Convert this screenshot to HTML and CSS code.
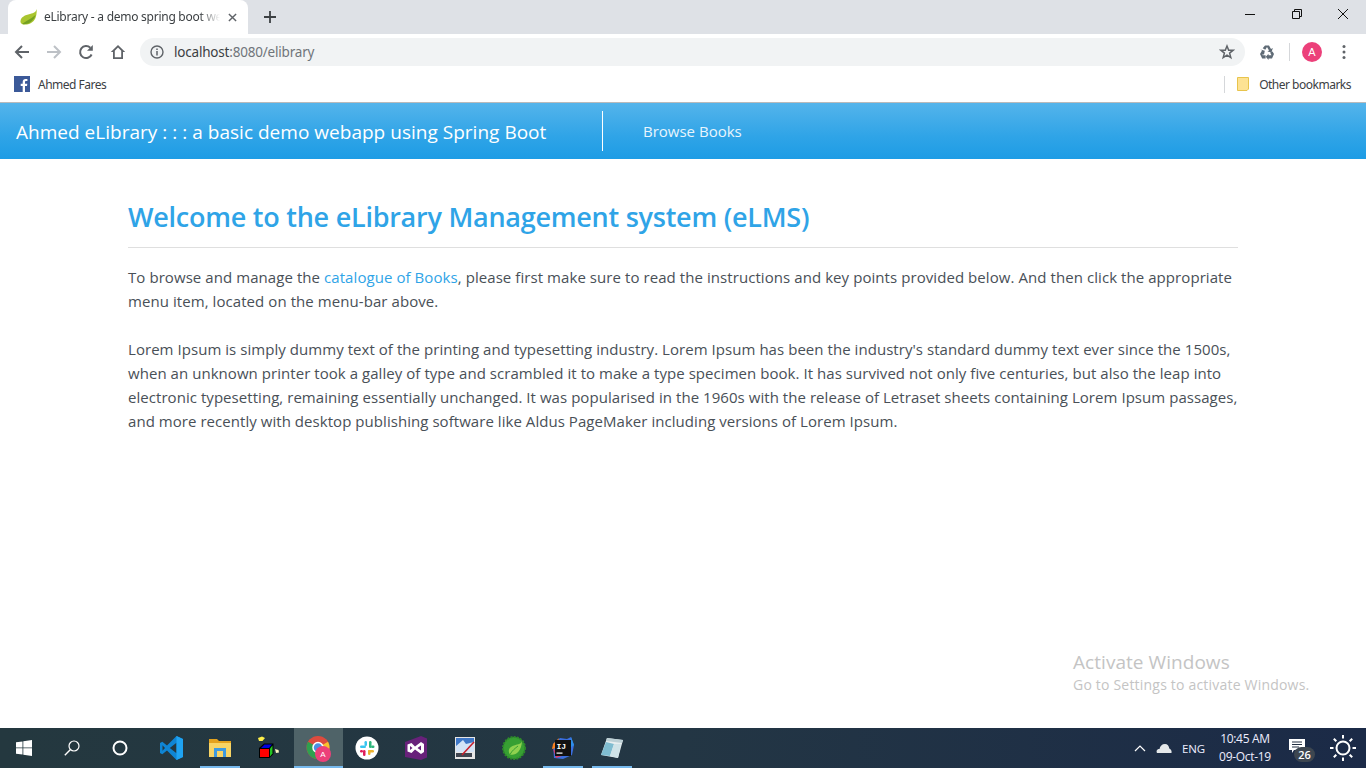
FILE: index.html
```html
<!DOCTYPE html>
<html lang="en">
<head>
<meta charset="utf-8">
<title>eLibrary - a demo spring boot webapp</title>
<link rel="stylesheet" href="styles.css">
</head>
<body>
<div class="tabstrip">
  <div class="tab">
    <svg class="favicon" viewBox="0 0 17 16"><path d="M16.500 0C16 3 14 4 10 5C5 6 1 8 .5 12C.3 13.500 1 14.500 2 15C6 16.500 13 15 15.500 9C16.500 6 17 3 16.500 0Z" fill="#a9c52f"/><path d="M2 15C6 12 10 10.500 15.500 6C14.500 11 9 15.500 3.500 15.300Z" fill="#74a022"/></svg>
    <span class="tab-title">eLibrary - a demo spring boot webapp</span>
    <svg class="tab-close" viewBox="0 0 10 10"><path d="M1 1L9 9M9 1L1 9" stroke="#5f6368" stroke-width="1.600"/></svg>
  </div>
  <svg class="new-tab" viewBox="0 0 12 12"><path d="M6 0V12M0 6H12" stroke="#3c4043" stroke-width="1.800"/></svg>
  <div class="win-controls">
    <svg viewBox="0 0 12 12"><path d="M1 6.500H11" stroke="#111" stroke-width="1"/></svg>
    <svg viewBox="0 0 12 12"><path d="M1.500 3.500H8.500V10.500H1.500ZM3.500 3.500V1.500H10.500V8.500H8.500" fill="none" stroke="#111" stroke-width="1"/></svg>
    <svg viewBox="0 0 12 12"><path d="M1 1L11 11M11 1L1 11" stroke="#111" stroke-width="1"/></svg>
  </div>
</div>

<div class="toolbar">
  <div class="tool"><svg viewBox="0 0 16 16"><path d="M15 8H2M8 2L2 8L8 14" fill="none" stroke="#5f6368" stroke-width="2"/></svg></div>
  <div class="tool"><svg viewBox="0 0 16 16"><path d="M1 8H14M8 2L14 8L8 14" fill="none" stroke="#bdc1c6" stroke-width="2"/></svg></div>
  <div class="tool"><svg viewBox="0 0 16 16"><path d="M13.600 10.500A6 6 0 1 1 12.300 3.800" fill="none" stroke="#5f6368" stroke-width="2"/><path d="M14.800 1V6.800H9Z" fill="#5f6368"/></svg></div>
  <div class="tool"><svg viewBox="0 0 16 16"><path d="M8 1L.8 8H3V15H13V8H15.200ZM8 3.600L11.200 6.800V13.300H4.800V6.800Z" fill="#5f6368" fill-rule="evenodd"/></svg></div>
  <div class="omnibox">
    <svg class="info" viewBox="0 0 14 14"><circle cx="7" cy="7" r="6" fill="none" stroke="#5f6368" stroke-width="1.400"/><path d="M7 6V10.500M7 3.400V5" stroke="#5f6368" stroke-width="1.500"/></svg>
    <span class="url"><span class="host">localhost</span>:8080/elibrary</span>
    <svg class="star" viewBox="0 0 16 16"><path d="M8 2L9.700 6.200H14.200L10.600 9.100L11.800 13.600L8 11.100L4.200 13.600L5.400 9.100L1.800 6.200H6.300Z" fill="none" stroke="#5f6368" stroke-width="1.500"/></svg>
  </div>
  <div class="ext"><svg viewBox="0 0 16 16"><path d="M6 1.500H10L12 5L13.800 4L12.500 8.500L8.500 7.500L10 6.500L8 3L6.300 5.800L3.700 4.300ZM1 10L3 6.500L1.300 5.500L5.800 6.800L5 10.800L3.700 10L3.600 11.200H6.600V14.500H3.200ZM15 10L13 14.500H9.500V16L6.800 12.800L9.500 9.800V11.200H12.500L11.200 8.800L13.500 7.500Z" fill="#5f6b76"/></svg></div>
  <div class="tool-sep"></div>
  <div class="avatar">A</div>
  <svg class="dots" viewBox="0 0 4 16"><circle cx="2" cy="2.500" r="1.500"/><circle cx="2" cy="8" r="1.500"/><circle cx="2" cy="13.500" r="1.500"/></svg>
</div>

<div class="bookmarks">
  <svg class="fb" viewBox="0 0 16 16"><rect width="16" height="16" fill="#3b5998"/><path d="M11 16V10H13L13.300 7.700H11V6.300C11 5.600 11.300 5.100 12.200 5.100H13.400V3.100C13 3 12.300 3 11.500 3C9.800 3 8.700 4 8.700 5.900V7.700H6.700V10H8.700V16Z" fill="#fff"/></svg>
  <span class="bm-label">Ahmed Fares</span>
  <div class="bm-spacer"></div>
  <div class="bm-sep"></div>
  <svg class="folder" viewBox="0 0 12 14"><path d="M.5 .5H11.500V12L10 13.500H.5Z" fill="#fde293" stroke="#e8c44c"/></svg>
  <span class="bm-label other">Other bookmarks</span>
</div>

<nav class="navbar">
  <a class="brand">Ahmed eLibrary : : : a basic demo webapp using Spring Boot</a>
  <div class="nav-divider"></div>
  <a class="nav-link">Browse Books</a>
</nav>

<main class="content">
  <h1 class="title">Welcome to the eLibrary Management system (eLMS)</h1>
  <hr class="rule">
  <p class="para">To browse and manage the <a class="link">catalogue of Books</a>, please first make sure to read the instructions and key points provided below. And then click the appropriate<br>menu item, located on the menu-bar above.</p>
  <p class="para lorem">Lorem Ipsum is simply dummy text of the printing and typesetting industry. Lorem Ipsum has been the industry's standard dummy text ever since the 1500s,<br>when an unknown printer took a galley of type and scrambled it to make a type specimen book. It has survived not only five centuries, but also the leap into<br>electronic typesetting, remaining essentially unchanged. It was popularised in the 1960s with the release of Letraset sheets containing Lorem Ipsum passages,<br>and more recently with desktop publishing software like Aldus PageMaker including versions of Lorem Ipsum.</p>
</main>

<div class="watermark">
  <div class="wm-big">Activate Windows</div>
  <div class="wm-small">Go to Settings to activate Windows.</div>
</div>

<footer class="taskbar">
  <div class="task sys"><svg class="i16" viewBox="0 0 16 16"><path d="M0 2.300L6.500 1.400V7.500H0ZM7.300 1.300L16 0V7.500H7.300ZM0 8.300H6.500V14.600L0 13.700ZM7.300 8.300H16V16L7.300 14.700Z" fill="#fff"/></svg></div>
  <div class="task sys"><svg class="i16" viewBox="0 0 16 16"><circle cx="10" cy="6" r="5" fill="none" stroke="#fff" stroke-width="1.200"/><path d="M6.500 9.500L.8 15.300" stroke="#fff" stroke-width="1.400"/></svg></div>
  <div class="task sys"><svg class="i16" viewBox="0 0 16 16"><circle cx="8" cy="8" r="6.500" fill="none" stroke="#fff" stroke-width="2"/></svg></div>
  <div class="task first-app"><svg class="i24" viewBox="0 0 24 24"><path d="M17.500 0L8 9.500L3.300 5.800L1 7V17L3.300 18.200L8 14.500L17.500 24L24 21V3ZM17.500 6.800V17.200L10.800 12ZM3.500 9.300L6 12L3.500 14.700Z" fill="#0f85d4" fill-rule="evenodd"/><path d="M17.500 0L24 3V21L17.500 24V17.200V6.800Z" fill="#1fa3f2"/></svg></div>
  <div class="task open"><svg class="i-folder" viewBox="0 0 22 18"><path d="M0 0H8L10 2H22V18H0Z" fill="#e3a21e"/><path d="M0 4H22V18H0Z" fill="#f7d465"/><path d="M5 9H17V18H14V12H8V18H5Z" fill="#3d9ae0"/></svg></div>
  <div class="task"><svg class="i24" viewBox="0 0 24 24"><path d="M2 12L7 7.500H16.500V18L12.500 22H2Z" fill="#000"/><path d="M3 13H12V21H3Z" fill="#f00"/><path d="M4 12L7.500 8.500H15L12 12Z" fill="#0000e0"/><path d="M13 12.500L15.500 9.500V17.500L13 20.500Z" fill="#22c422"/><path d="M1 2L5 0.500L8 2L5.500 5L2 5Z" fill="#fff04a"/><path d="M18 13L21.500 14L22 16.500L19 17Z" fill="#fff8c0"/></svg></div>
  <div class="task active"><svg class="i26" viewBox="0 0 26 26"><circle cx="13" cy="12.500" r="11.500" fill="#dd4b3e"/><path d="M13 12.500L3 6.800A11.500 11.500 0 0 0 13 24Z" fill="#2fa04f"/><path d="M13 12.500L13 24A11.500 11.500 0 0 0 23 6.800Z" fill="#f7c02e"/><circle cx="13" cy="12.500" r="5" fill="#4a90e2" stroke="#fff" stroke-width="1.500"/><circle cx="18" cy="19" r="8" fill="#ec407a"/><text x="18" y="22" class="badge-a">A</text></svg></div>
  <div class="task"><svg class="i24" viewBox="0 0 24 24"><circle cx="12" cy="12" r="11.500" fill="#fff"/><rect x="5" y="9.500" width="6" height="2.500" rx="1.200" fill="#36c5f0"/><rect x="9.500" y="5" width="2.500" height="5" rx="1.200" fill="#36c5f0"/><rect x="14" y="5" width="2.500" height="7" rx="1.200" fill="#2eb67d"/><rect x="16" y="9.500" width="3.500" height="2.500" rx="1.200" fill="#2eb67d"/><rect x="13" y="14" width="6" height="2.500" rx="1.200" fill="#ecb22e"/><rect x="13" y="14" width="2.500" height="5" rx="1.200" fill="#ecb22e"/><rect x="5" y="14" width="3" height="2.500" rx="1.200" fill="#e01e5a"/><rect x="8" y="14" width="2.500" height="6" rx="1.200" fill="#e01e5a"/></svg></div>
  <div class="task"><svg class="i24" viewBox="0 0 24 24"><path d="M17 0L23 2.500V21.500L17 24L1 21V6Z" fill="#68217a"/><path d="M3.500 8.500L7.500 7L11 10.500L17 6L20 8V16L17 18L11 13.500L7.500 17L3.500 15.500Z" fill="#fff"/><path d="M17 9.500V14.500L13.500 12ZM6 10L8.500 12L6 14Z" fill="#68217a"/></svg></div>
  <div class="task"><svg class="i-paint" viewBox="0 0 20 22"><rect width="20" height="22" fill="#e6e6e6"/><rect x="1" y="1" width="18" height="14" fill="#3f78c8"/><path d="M1 9L8 3L11 7L19 5V15H1Z" fill="#d3e3f6"/><rect x="1" y="16" width="16" height="4" fill="#3f4550"/><path d="M7 18L19 5" stroke="#c8202c" stroke-width="1.600"/></svg></div>
  <div class="task"><svg class="i24" viewBox="0 0 24 24"><circle cx="12" cy="12" r="11" fill="#37a033" stroke="#2d8a2a" stroke-width="2" stroke-dasharray="2 1.200"/><path d="M20 5C19 9 14.500 8 10.500 10C7 11.500 5.500 15 8 18.500C13 20 19.500 16 20 5Z" fill="#8fd14f"/><path d="M8 18.500C10 14.500 13 12.500 16 10" stroke="#37a033" fill="none"/></svg></div>
  <div class="task open"><svg class="i24" viewBox="0 0 24 24"><path d="M2 8L9 2L16 3L20 1L23 9L21 19L12 23L3 22Z" fill="#3a6fe0"/><path d="M2 8L8 2L5 12L1 13Z" fill="#fc801d"/><path d="M2 13L5 22L11 20Z" fill="#d83a6a"/><path d="M20 1L23 9L19 12Z" fill="#2d8fe8"/><rect x="4" y="4" width="16" height="16" fill="#111"/><text x="5.500" y="13" class="ij">IJ</text><rect x="5.500" y="16.500" width="6" height="1.200" fill="#fff"/></svg></div>
  <div class="task open"><svg class="i24" viewBox="0 0 24 24"><path d="M7 2L23 4L18 22L1 19Z" fill="#e8eef0"/><path d="M7 2L23 4L22 7L6 5Z" fill="#bcd0d6"/><path d="M1 19L6 6L14 8L10 20Z" fill="#7fbcd0"/><path d="M10 20L14 8L21 8L18 22Z" fill="#cfe3e8"/></svg></div>
  <div class="tray">
    <svg class="tray-up" viewBox="0 0 12 7"><path d="M1 6L6 1L11 6" fill="none" stroke="#fff" stroke-width="1.200"/></svg>
    <svg class="tray-cloud" viewBox="0 0 16 10"><path d="M1 10C0 8 1 6 3.500 6C4 3 6 1 9 1C11.500 1 13 3 13.300 5.500C15 6 16 8 15.500 10Z" fill="#e4e8ea"/></svg>
    <span class="lang">ENG</span>
    <div class="clock"><span>10:45 AM</span><span>09-Oct-19</span></div>
    <div class="notify">
      <svg class="i-notify" viewBox="0 0 16 14"><path d="M0 0H16V11H5L3 14V11H0Z" fill="#fff"/><path d="M3 3H13M3 5.500H13M3 8H10" stroke="#243042" stroke-width="1"/></svg>
      <span class="count">26</span>
    </div>
    <svg class="brightness" viewBox="0 0 28 28"><circle cx="14" cy="14" r="6.500" fill="none" stroke="#fff" stroke-width="2"/><path d="M14 1V4.500M14 23.500V27M1 14H4.500M23.500 14H27M4.800 4.800L7.300 7.300M20.700 20.700L23.200 23.200M4.800 23.200L7.300 20.700M20.700 7.300L23.200 4.800" stroke="#fff" stroke-width="2"/></svg>
  </div>
</footer>
</body>
</html>
```
FILE: styles.css
```css
* { box-sizing: border-box; }
html, body { margin: 0; height: 100%; }
body {
  display: flex;
  flex-direction: column;
  height: 768px;
  overflow: hidden;
  position: relative;
  background: #fff;
  font-family: "Open Sans", "Noto Sans", sans-serif;
}
svg { display: block; flex: none; }

/* tab strip */
.tabstrip { height: 34px; flex: none; display: flex; align-items: flex-end; background: #dee1e6; padding-left: 8px; }
.tab { width: 240px; height: 34px; background: #fff; border-radius: 8px 8px 0 0; display: flex; align-items: center; padding: 0 11px 0 12px; }
.favicon { width: 17px; height: 16px; }
.tab-title { width: 176px; margin-left: 7px; font-size: 12px; line-height: 16px; color: #3c4043; white-space: nowrap; overflow: hidden; font-family: "Noto Sans", sans-serif; letter-spacing: -.26px;
  -webkit-mask-image: linear-gradient(90deg, #000 88%, transparent); mask-image: linear-gradient(90deg, #000 88%, transparent); }
.tab-close { width: 9px; height: 9px; margin-left: 8px; }
.new-tab { width: 12px; height: 12px; margin: 0 0 11px 16px; }
.win-controls { margin-left: auto; display: flex; align-self: flex-start; gap: 34.500px; padding: 8px 17px 0 0; }
.win-controls svg { width: 12px; height: 12px; }

/* toolbar */
.toolbar { height: 36px; flex: none; display: flex; align-items: center; padding: 0 6px 0 6px; background: #fff; }
.tool { width: 32px; height: 32px; display: flex; align-items: center; justify-content: center; }
.tool svg { width: 16px; height: 16px; }
.omnibox { flex: 1; height: 28px; margin-left: 6px; border-radius: 14px; background: #f1f3f4; display: flex; align-items: center; padding: 0 10px 0 10px; }
.info { width: 14px; height: 14px; }
.url { margin-left: 10px; font-size: 13.500px; color: #70757a; font-family: "Noto Sans", sans-serif; letter-spacing: -.2px; }
.host { color: #3c4043; }
.star { width: 16px; height: 16px; margin-left: auto; }
.ext { width: 44px; display: flex; justify-content: center; }
.ext svg { width: 16px; height: 16px; }
.tool-sep { width: 1px; height: 18px; background: #d5d7da; }
.avatar { width: 20px; height: 20px; margin-left: 12px; border-radius: 50%; background: #ec407a; color: #fff; font-size: 11px; line-height: 20px; text-align: center; font-family: "Liberation Sans", sans-serif; }
.dots { width: 4px; height: 16px; margin-left: 20px; margin-right: 14px; fill: #5f6368; }

/* bookmarks */
.bookmarks { height: 33px; flex: none; display: flex; align-items: center; padding: 0 15px 4px 14px; background: #fff; border-bottom: 1px solid #b9babb; }
.fb { width: 16px; height: 16px; }
.bm-label { margin-left: 8px; font-size: 12px; color: #3c4043; font-family: "Noto Sans", sans-serif; letter-spacing: -.5px; }
.bm-spacer { flex: 1; }
.bm-sep { width: 1px; height: 17px; background: #d5d7da; margin-right: 12px; }
.folder { width: 12px; height: 14px; }
.other { margin-left: 10px; }

/* navbar */
.navbar { height: 56px; flex: none; display: flex; align-items: center; padding-left: 16px; background: linear-gradient(#54b4eb, #2fa4e7 60%, #1d9ce5); color: #fff; }
.brand { width: 530px; padding-top: 2px; font-size: 19px; white-space: nowrap; letter-spacing: .02px; }
.nav-divider { width: 1px; height: 40px; margin-left: 56px; background: #fff; }
.nav-link { margin-left: 40px; font-size: 15px; white-space: nowrap; color: #e8f5fd; }

/* content */
.content { flex: 1; padding: 38px 128px 0; }
.title { margin: 0; font-size: 27px; line-height: 40px; font-weight: 600; color: #2fa4e7; white-space: nowrap; letter-spacing: -.25px; }
.rule { margin: 10px 0 0; border: 0; border-top: 1px solid #dfdfdf; }
.para { margin: 17px 0 0; font-size: 15px; line-height: 24px; color: #495057; white-space: nowrap; letter-spacing: .07px; }
.para.lorem { margin-top: 24px; letter-spacing: .05px; }
.link { color: #2fa4e7; }

/* watermark */
.watermark { position: absolute; left: 1073px; top: 650px; color: #c4c4c4; white-space: nowrap; pointer-events: none; }
.wm-big { font-size: 19px; line-height: 24px; letter-spacing: .05px; }
.wm-small { font-size: 14px; line-height: 22px; letter-spacing: .2px; }

/* taskbar */
.taskbar { height: 40px; flex: none; display: flex; background: linear-gradient(90deg, #24383f, #233644 50%, #1b2a47); }
.task { width: 49px; height: 40px; display: flex; align-items: center; justify-content: center; position: relative; }
.task.sys { width: 48px; }
.first-app { margin-left: 2.500px; }
.task.active { background: #4f6368; box-shadow: inset 0 -2px #76b9ed; }
.task.open::after { content: ""; position: absolute; left: 4.500px; right: 4.500px; bottom: 0; height: 2px; background: #76b9ed; }
.i16 { width: 16px; height: 16px; }
.i24 { width: 24px; height: 24px; }
.i26 { width: 26px; height: 26px; overflow: visible; }
.i-folder { width: 22px; height: 18px; }
.i-paint { width: 20px; height: 22px; }
.i-notify { width: 16px; height: 14px; }
.badge-a { font: 8px "Liberation Sans", sans-serif; fill: #fff; text-anchor: middle; }
.ij { font: bold 8px "Liberation Mono", monospace; fill: #fff; }
.tray { margin-left: auto; display: flex; align-items: center; color: #fff; }
.tray-up { width: 12px; height: 7px; }
.tray-cloud { width: 16px; height: 10px; margin-left: 10px; }
.lang { margin-left: 10px; width: 23px; font-size: 11.500px; letter-spacing: -.1px; color: #eef; white-space: nowrap; }
.clock { margin-left: 13px; width: 54px; display: flex; flex-direction: column; align-items: center; font-size: 12px; line-height: 18px; letter-spacing: -.3px; color: #eef; white-space: nowrap; }
.notify { margin-left: 17px; width: 26px; height: 30px; position: relative; padding-top: 6px; }
.count { position: absolute; left: 5px; top: 14px; width: 21px; height: 15px; border-radius: 8px; background: #3d4650; font-size: 11px; font-weight: 600; line-height: 15px; text-align: center; color: #fff; }
.brightness { width: 28px; height: 28px; margin: 0 9px 0 14px; }
```
